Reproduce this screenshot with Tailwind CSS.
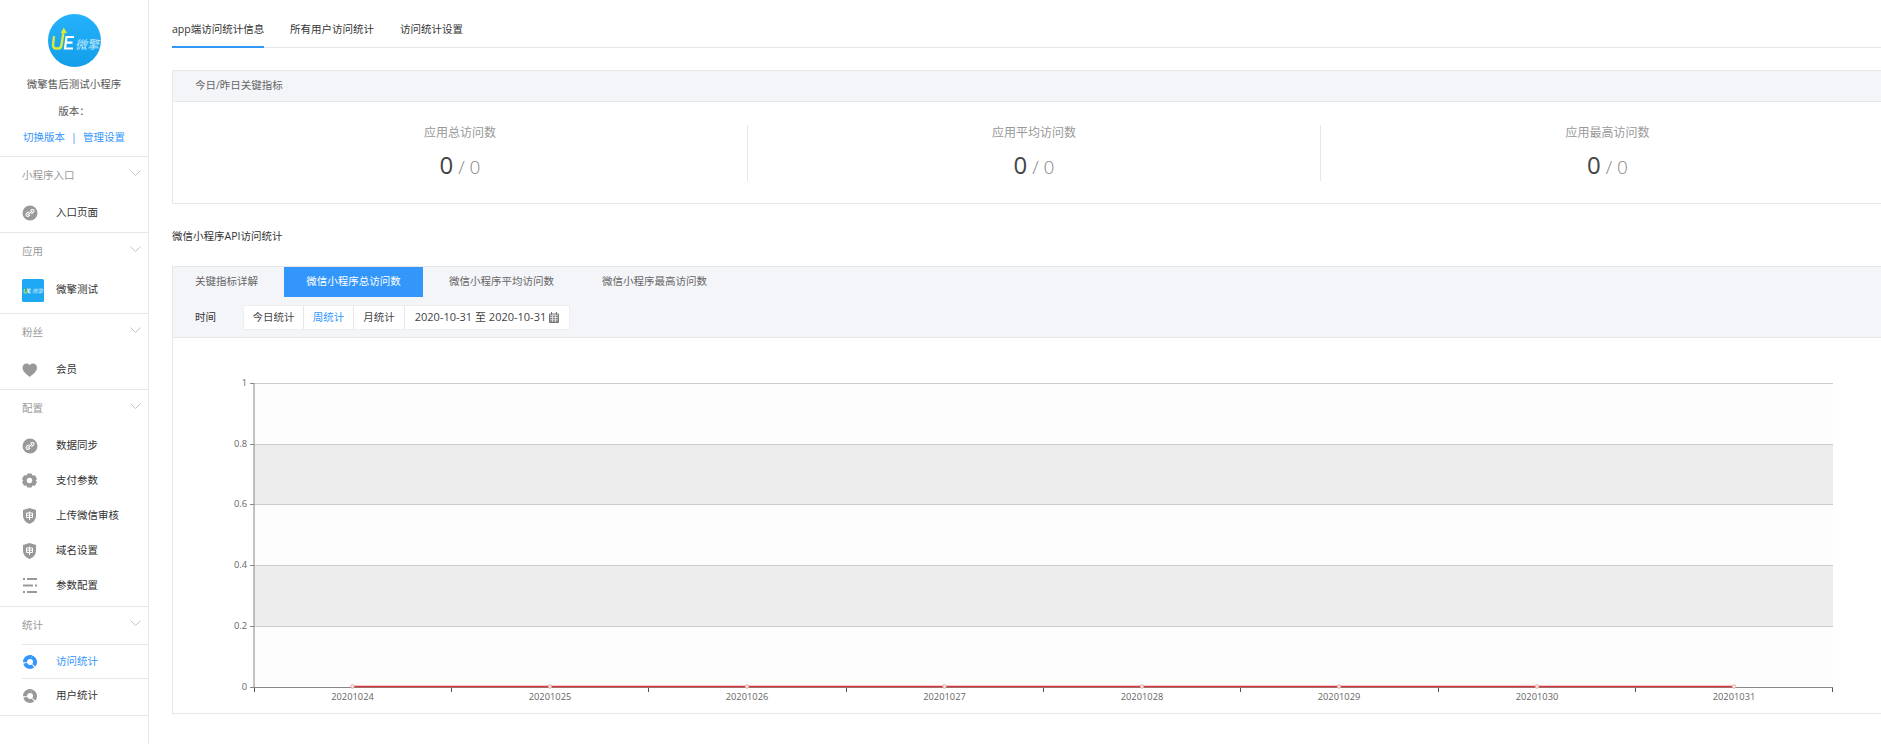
<!DOCTYPE html>
<html lang="zh">

<head>
    <meta charset="UTF-8">
    <meta name="viewport" content="width=device-width, initial-scale=1.0">
    <title>访问统计</title>
    <script src="https://cdn.jsdelivr.net/npm/@tailwindcss/browser@4"></script>
</head>

<body class="bg-white text-[#333] text-[10.5px] font-['Open_Sans','Noto_Sans_CJK_SC',sans-serif] overflow-hidden">
    <div class="flex h-[744px] w-[1881px] overflow-hidden">
        <!-- sidebar -->
        <aside class="w-[149px] shrink-0 border-r border-[#e7e7eb] h-full">
            <div class="h-[157px] border-b border-[#e7e7eb] flex flex-col items-center">
                <svg class="mt-[14px]" width="53" height="53" viewBox="0 0 53 53">
                    <defs>
                        <linearGradient id="logoBg" x1="0" y1="0" x2="0" y2="1">
                            <stop offset="0" stop-color="#25b1fb" />
                            <stop offset="1" stop-color="#139ee9" />
                        </linearGradient>
                    </defs>
                    <circle cx="26.5" cy="26.5" r="26.5" fill="url(#logoBg)" />
                    <path d="M6 22 5 31Q5 34.500 8 34.500H10.500Q13 34.500 13.500 31L15.500 18" fill="none" stroke="#dce83a" stroke-width="2.400" />
                    <path d="M15.700 13.500 19 19H12.800Z" fill="#dce83a" />
                    <path d="M26 23H18.500L17 34.500H25M17.500 28.700H24.500" fill="none" stroke="#fff" stroke-width="2.200" />
                    <text x="27" y="34.500" font-size="12" font-style="italic" fill="#bfe6fb">微擎</text>
                </svg>
                <div class="mt-[9px] h-[16px] leading-[16px] text-[#555]">微擎售后测试小程序</div>
                <div class="mt-[11px] h-[16px] leading-[16px] text-[#555] font-['Noto_Sans_CJK_TC',sans-serif]">版本：</div>
                <div class="mt-[10px] h-[16px] leading-[16px] text-[#3296fa] flex gap-[6px]">
                    <span>切换版本</span><span>|</span><span>管理设置</span>
                </div>
            </div>

            <div class="h-[76px] border-b border-[#e7e7eb]">
                <div class="h-[38px] pl-[22px] pr-[7px] flex items-center justify-between text-[#999]">
                    <span>小程序入口</span>
                    <svg width="11" height="6" viewBox="0 0 11 6" class="-mt-[6px]"><path d="M.5 .5 5.500 5.500 10.500 .5" fill="none" stroke="#c4c4c4" /></svg>
                </div>
                <div class="h-[35px] pl-[22px] flex items-center gap-[11px]">
                    <svg width="23" height="16" viewBox="0 0 23 16"><circle cx="8" cy="8" r="7.500" fill="#999" /><path d="M5.800 10.200 10.200 5.800M8.500 5.500 9.500 4.800Q11 4 11.800 5 12.500 6.200 11.300 7.200L9.500 8.800M7.500 7.200Q6.500 6.700 5.500 7.500L4.500 8.500Q3.500 9.800 4.500 10.900 5.500 11.800 6.800 11L8 10" fill="none" stroke="#fff" stroke-width="1.100" /></svg>
                    <span>入口页面</span>
                </div>
            </div>

            <div class="h-[81px] border-b border-[#e7e7eb]">
                <div class="h-[38px] pl-[22px] pr-[7px] flex items-center justify-between text-[#999]">
                    <span>应用</span>
                    <svg width="11" height="6" viewBox="0 0 11 6" class="-mt-[6px]"><path d="M.5 .5 5.500 5.500 10.500 .5" fill="none" stroke="#c4c4c4" /></svg>
                </div>
                <div class="h-[38px] pl-[22px] flex items-center gap-[12px]">
                    <svg width="22" height="23" viewBox="0 0 22 23">
                        <rect width="22" height="23" rx="1.500" fill="#1ea8f3" />
                        <path d="M2.500 10 2 13Q2 14 3 14H4Q5 14 5.200 13L5.800 9" fill="none" stroke="#dce83a" />
                        <path d="M9 10.200H6.800L6.300 13.800H8.800M6.500 12H8.600" fill="none" stroke="#fff" stroke-width=".8" />
                        <text x="10" y="14" font-size="5.500" font-style="italic" fill="#bfe6fb">微擎</text>
                    </svg>
                    <span>微擎测试</span>
                </div>
            </div>

            <div class="h-[76px] border-b border-[#e7e7eb]">
                <div class="h-[38px] pl-[22px] pr-[7px] flex items-center justify-between text-[#999]">
                    <span>粉丝</span>
                    <svg width="11" height="6" viewBox="0 0 11 6" class="-mt-[6px]"><path d="M.5 .5 5.500 5.500 10.500 .5" fill="none" stroke="#c4c4c4" /></svg>
                </div>
                <div class="h-[35px] pl-[22px] flex items-center gap-[11px]">
                    <svg width="23" height="14" viewBox="0 0 23 14"><path d="M7.700 14C4 11 .5 8.500 .5 4.800 .5 2 2.500 .5 4.500 .5 6 .5 7 1.200 7.700 2.200 8.400 1.200 9.500 .5 11 .5 13 .5 15 2 15 4.800 15 8.500 11.400 11 7.700 14Z" fill="#999" /></svg>
                    <span>会员</span>
                </div>
            </div>

            <div class="h-[217px] border-b border-[#e7e7eb]">
                <div class="h-[38px] pl-[22px] pr-[7px] flex items-center justify-between text-[#999]">
                    <span>配置</span>
                    <svg width="11" height="6" viewBox="0 0 11 6" class="-mt-[6px]"><path d="M.5 .5 5.500 5.500 10.500 .5" fill="none" stroke="#c4c4c4" /></svg>
                </div>
                <div class="h-[35px] pl-[22px] flex items-center gap-[11px]">
                    <svg width="23" height="16" viewBox="0 0 23 16"><circle cx="8" cy="8" r="7.500" fill="#999" /><path d="M5.800 10.200 10.200 5.800M8.500 5.500 9.500 4.800Q11 4 11.800 5 12.500 6.200 11.300 7.200L9.500 8.800M7.500 7.200Q6.500 6.700 5.500 7.500L4.500 8.500Q3.500 9.800 4.500 10.900 5.500 11.800 6.800 11L8 10" fill="none" stroke="#fff" stroke-width="1.100" /></svg>
                    <span>数据同步</span>
                </div>
                <div class="h-[35px] pl-[22px] flex items-center gap-[11px]">
                    <svg width="23" height="15" viewBox="0 0 23 15"><path d="M5.500 0.500H9.500L10.500 2.400 13 2.200 15 6 13.700 7.500 15 9 13 12.800 10.500 12.600 9.500 14.500H5.500L4.500 12.600 2 12.800 0 9 1.300 7.500 0 6 2 2.200 4.500 2.400Z" fill="#999" /><circle cx="7.500" cy="7.500" r="2.700" fill="#fff" /></svg>
                    <span>支付参数</span>
                </div>
                <div class="h-[35px] pl-[22px] flex items-center gap-[11px]">
                    <svg width="23" height="16" viewBox="0 0 23 16"><path d="M7.500 0 14 2V8Q14 13 7.500 16 1 13 1 8V2Z" fill="#999" /><path d="M4.500 5H10.500V9.500H4.500ZM7.500 3.500V12M4.500 7.200H10.500" fill="none" stroke="#fff" /></svg>
                    <span>上传微信审核</span>
                </div>
                <div class="h-[35px] pl-[22px] flex items-center gap-[11px]">
                    <svg width="23" height="16" viewBox="0 0 23 16"><path d="M7.500 0 14 2V8Q14 13 7.500 16 1 13 1 8V2Z" fill="#999" /><path d="M4.500 5H10.500V9.500H4.500ZM7.500 3.500V12M4.500 7.200H10.500" fill="none" stroke="#fff" /></svg>
                    <span>域名设置</span>
                </div>
                <div class="h-[35px] pl-[22px] flex items-center gap-[11px]">
                    <svg width="23" height="15" viewBox="0 0 23 15"><path d="M1 1H3M5 1H15M1 7.500H11M13 7.500H15M1 14H3M5 14H15" fill="none" stroke="#999" stroke-width="2" /></svg>
                    <span>参数配置</span>
                </div>
            </div>

            <div class="h-[109px] border-b border-[#e7e7eb]">
                <div class="h-[37px] pl-[22px] pr-[7px] flex items-center justify-between text-[#999]">
                    <span>统计</span>
                    <svg width="11" height="6" viewBox="0 0 11 6" class="-mt-[6px]"><path d="M.5 .5 5.500 5.500 10.500 .5" fill="none" stroke="#c4c4c4" /></svg>
                </div>
                <div class="ml-[22px] h-[34px] border-t border-[#e7e7eb] flex items-center gap-[11px] text-[#3296fa]">
                    <svg width="23" height="16" viewBox="0 0 23 16"><circle cx="8" cy="8" r="5" fill="none" stroke="#3296fa" stroke-width="4" stroke-dasharray="9.500 .97" transform="rotate(-70 8 8)" /></svg>
                    <span>访问统计</span>
                </div>
                <div class="ml-[22px] h-[34px] border-t border-[#e7e7eb] flex items-center gap-[11px]">
                    <svg width="23" height="16" viewBox="0 0 23 16"><circle cx="8" cy="8" r="5" fill="none" stroke="#999" stroke-width="4" stroke-dasharray="9.500 .97" transform="rotate(-70 8 8)" /></svg>
                    <span>用户统计</span>
                </div>
            </div>
        </aside>

        <!-- main -->
        <main class="pl-[23px] w-[1746px] shrink-0">
            <nav class="h-[48px] border-b border-[#e7e7eb] flex gap-[26px]">
                <a class="h-[48px] pt-[21px] leading-[16px] border-b-2 border-[#3296fa] w-[92px] whitespace-nowrap">app端访问统计信息</a>
                <a class="pt-[21px] leading-[16px]">所有用户访问统计</a>
                <a class="pt-[21px] leading-[16px]">访问统计设置</a>
            </nav>

            <section class="mt-[22px] h-[134px] border border-[#e7e7eb]">
                <div class="h-[31px] bg-[#f4f5f9] border-b border-[#e7e7eb] pl-[22px] flex items-center text-[#666]">今日/昨日关键指标</div>
                <div class="flex pt-[23px]">
                    <div class="w-[576px] h-[56px] border-r border-[#e7e7eb] flex flex-col items-center">
                        <div class="text-[12px] leading-[16px] text-[#999]">应用总访问数</div>
                        <div class="mt-[7px] leading-[34px] text-[#888] text-[19px] font-light"><span class="text-[24px] font-normal text-[#444]">0</span> / 0</div>
                    </div>
                    <div class="w-[574px] h-[56px] border-r border-[#e7e7eb] flex flex-col items-center">
                        <div class="text-[12px] leading-[16px] text-[#999]">应用平均访问数</div>
                        <div class="mt-[7px] leading-[34px] text-[#888] text-[19px] font-light"><span class="text-[24px] font-normal text-[#444]">0</span> / 0</div>
                    </div>
                    <div class="w-[574px] h-[56px] flex flex-col items-center">
                        <div class="text-[12px] leading-[16px] text-[#999]">应用最高访问数</div>
                        <div class="mt-[7px] leading-[34px] text-[#888] text-[19px] font-light"><span class="text-[24px] font-normal text-[#444]">0</span> / 0</div>
                    </div>
                </div>
            </section>

            <h2 class="mt-[24px] h-[16px] leading-[16px]">微信小程序API访问统计</h2>

            <section class="mt-[22px] h-[448px] border border-[#e7e7eb]">
                <div class="h-[71px] bg-[#f4f5f9] border-b border-[#e7e7eb]">
                    <div class="h-[30px] flex items-center pl-[22px] text-[#666]">
                        <span class="w-[89px]">关键指标详解</span>
                        <span class="w-[139px] h-[30px] bg-[#3296fa] text-white flex items-center justify-center">微信小程序总访问数</span>
                        <span class="ml-[26px] w-[153px]">微信小程序平均访问数</span>
                        <span>微信小程序最高访问数</span>
                    </div>
                    <div class="mt-[8px] flex items-center pl-[22px]">
                        <span class="w-[48px] text-[#333]">时间</span>
                        <div class="flex h-[25px] bg-white border border-[#eeeef2] rounded-[2px] text-[#444]">
                            <span class="w-[60px] flex items-center justify-center border-r border-[#e7e7eb]">今日统计</span>
                            <span class="w-[50px] flex items-center justify-center border-r border-[#e7e7eb] text-[#3296fa]">周统计</span>
                            <span class="w-[51px] flex items-center justify-center border-r border-[#e7e7eb]">月统计</span>
                            <span class="w-[164px] flex items-center justify-center gap-[3px] text-[11px] whitespace-nowrap">2020-10-31 至 2020-10-31
                                <svg width="10" height="11" viewBox="0 0 10 11"><path d="M.5 2H9.500V10.500H.5ZM2.500 0V3M7.500 0V3" fill="none" stroke="#777" /><path d="M1 3.500H9V10H1Z" fill="#8a8a8a" /><path d="M1 5.500H9M1 7.800H9M3.500 3.500V10M6.500 3.500V10" stroke="#fff" stroke-width=".6" /></svg>
                            </span>
                        </div>
                    </div>
                </div>
                <svg class="block" width="1722" height="375" viewBox="0 0 1722 375" font-size="9.300" fill="#666">
                    <rect x="81" y="45" width="1579" height="61" fill="#fdfdfd" />
                    <rect x="81" y="106" width="1579" height="61" fill="#ededed" />
                    <rect x="81" y="167" width="1579" height="60" fill="#fdfdfd" />
                    <rect x="81" y="227" width="1579" height="61" fill="#ededed" />
                    <rect x="81" y="288" width="1579" height="61" fill="#fdfdfd" />
                    <path d="M81 45.500H1660M81 106.500H1660M81 166.500H1660M81 227.500H1660M81 288.500H1660" stroke="#ccc" fill="none" />
                    <path d="M81 45V350M77 45.500H81M77 106.500H81M77 166.500H81M77 227.500H81M77 288.500H81M77 349.500H81" stroke="#888" fill="none" />
                    <path d="M81 349.500H1660" stroke="#888" fill="none" />
                    <path d="M81.500 350V354M278.500 350V354M475.500 350V354M673.500 350V354M870.500 350V354M1067.500 350V354M1265.500 350V354M1462.500 350V354M1659.500 350V354" stroke="#555" fill="none" />
                    <g text-anchor="end">
                        <text x="74" y="48">1</text>
                        <text x="74" y="109">0.8</text>
                        <text x="74" y="169">0.6</text>
                        <text x="74" y="230">0.4</text>
                        <text x="74" y="291">0.2</text>
                        <text x="74" y="352">0</text>
                    </g>
                    <path d="M179.500 348.500H1561" stroke="#dd3333" stroke-width="1.500" fill="none" />
                    <g fill="#fff" stroke="#ef9a9a">
                        <circle cx="179.500" cy="348.500" r="1.700" />
                        <circle cx="377" cy="348.500" r="1.700" />
                        <circle cx="574" cy="348.500" r="1.700" />
                        <circle cx="771.500" cy="348.500" r="1.700" />
                        <circle cx="969" cy="348.500" r="1.700" />
                        <circle cx="1166" cy="348.500" r="1.700" />
                        <circle cx="1364" cy="348.500" r="1.700" />
                        <circle cx="1561" cy="348.500" r="1.700" />
                    </g>
                    <g text-anchor="middle">
                        <text x="179.500" y="362">20201024</text>
                        <text x="377" y="362">20201025</text>
                        <text x="574" y="362">20201026</text>
                        <text x="771.500" y="362">20201027</text>
                        <text x="969" y="362">20201028</text>
                        <text x="1166" y="362">20201029</text>
                        <text x="1364" y="362">20201030</text>
                        <text x="1561" y="362">20201031</text>
                    </g>
                </svg>
            </section>
        </main>
    </div>
</body>

</html>
